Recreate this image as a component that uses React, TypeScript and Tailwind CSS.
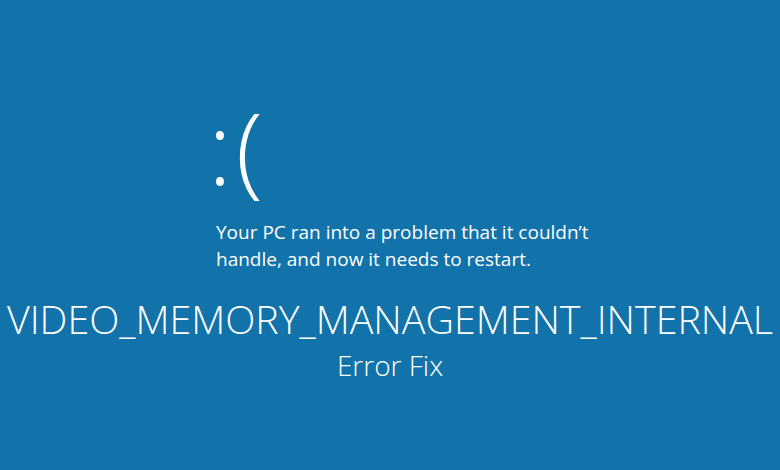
import React from "react";

const App: React.FC = () => {
  return (
    <div
      className="w-[780px] h-[470px] bg-[#1272aa] text-white overflow-hidden flex flex-col"
      style={{ fontFamily: '"Open Sans", "Noto Sans", sans-serif' }}
    >
      <div className="pl-[208px] pt-[86px]">
        <div className="text-[100px] leading-[120px] font-light tracking-[4px]">:(</div>
        <p className="ml-[8px] mt-[13px] text-[19px] leading-[27px] font-normal">
          Your PC ran into a problem that it couldn’t
          <br />
          handle, and now it needs to restart.
        </p>
      </div>
      <div className="mt-[22px] text-center">
        <h1 className="text-[39.4px] leading-[48px] font-light whitespace-nowrap">
          VIDEO_MEMORY_MANAGEMENT_INTERNAL
        </h1>
        <div className="mt-[5px] text-[28px] leading-[34px] font-light">Error Fix</div>
      </div>
    </div>
  );
};

export default App;
